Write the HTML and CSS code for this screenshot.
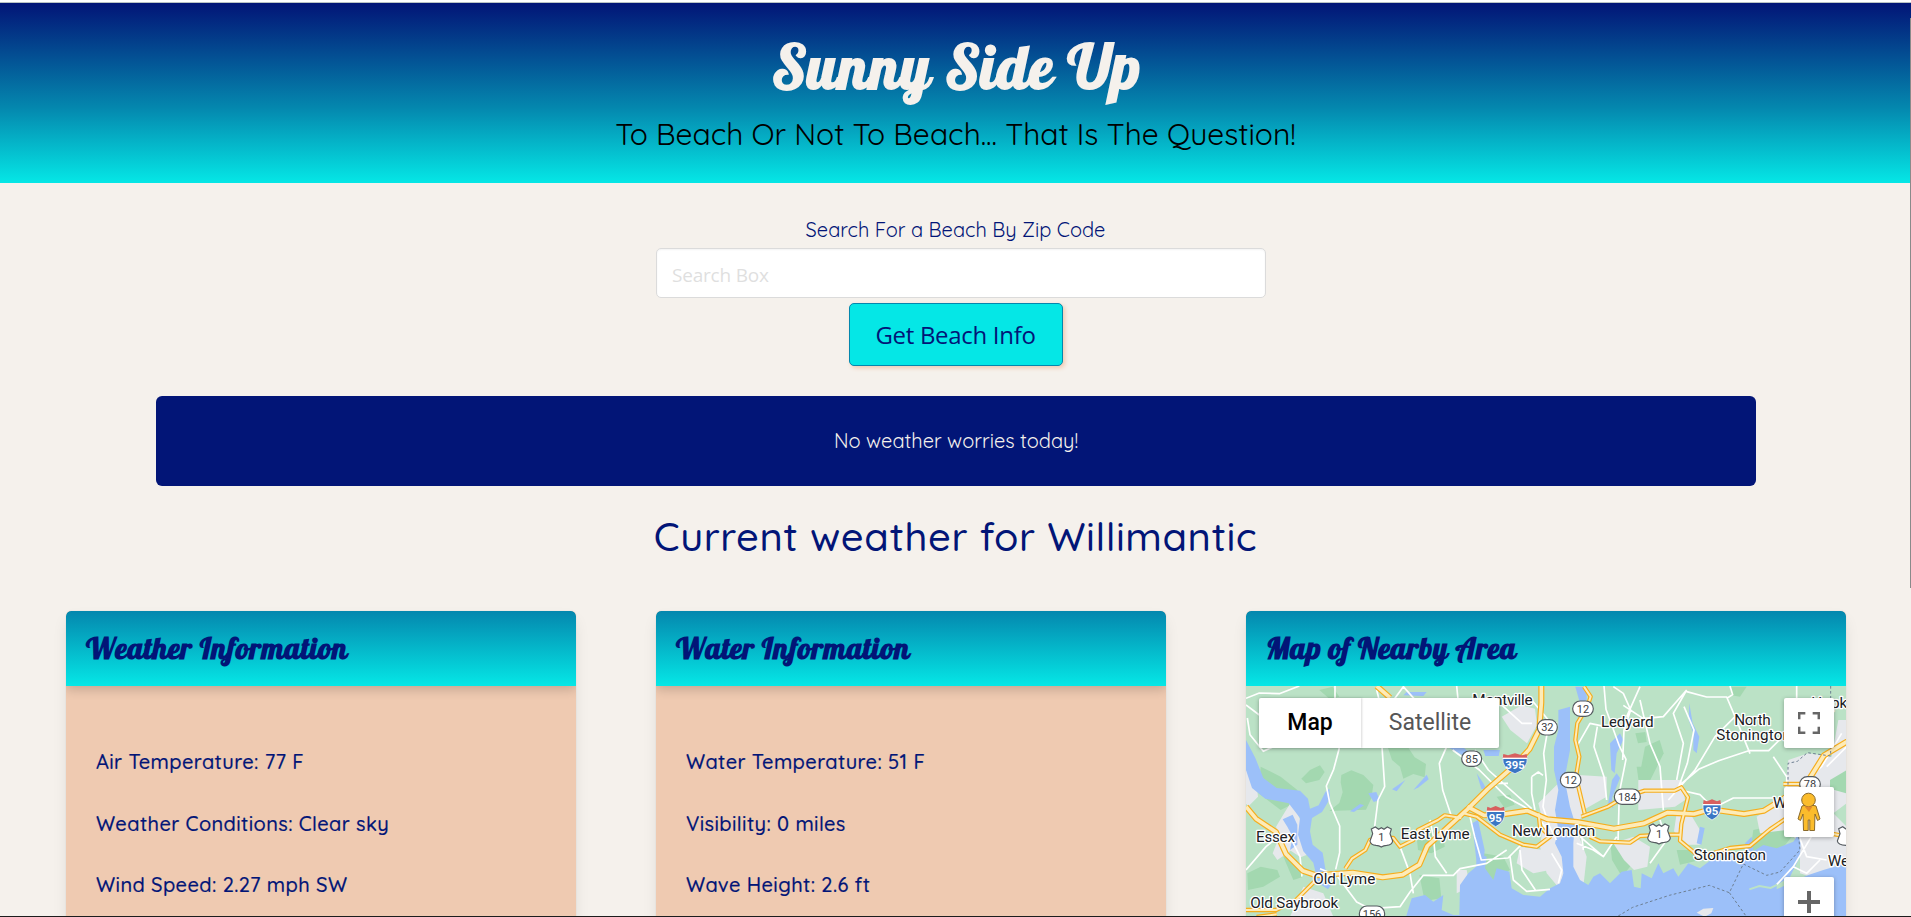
FILE: index.html
```html
<!DOCTYPE html>
<html lang="en">
<head>
<meta charset="utf-8">
<title>Sunny Side Up</title>
<link rel="stylesheet" href="styles.css">
</head>
<body>
<div class="page">
  <header class="hero">
    <h1 class="hero-title">Sunny Side Up</h1>
    <p class="hero-subtitle">To Beach Or Not To Beach... That Is The Question!</p>
  </header>

  <form class="search">
    <label class="search-label" for="zip">Search For a Beach By Zip Code</label>
    <input class="search-input" id="zip" type="text" placeholder="Search Box">
    <button class="search-button" type="button">Get Beach Info</button>
  </form>

  <div class="alert">No weather worries today!</div>
  <h2 class="current">Current weather for Willimantic</h2>

  <main class="cards">
    <section class="card">
      <h3 class="card-header">Weather Information</h3>
      <ul class="card-list">
        <li>Air Temperature: 77 F</li>
        <li>Weather Conditions: Clear sky</li>
        <li>Wind Speed: 2.27 mph SW</li>
      </ul>
    </section>
    <section class="card">
      <h3 class="card-header">Water Information</h3>
      <ul class="card-list">
        <li>Water Temperature: 51 F</li>
        <li>Visibility: 0 miles</li>
        <li>Wave Height: 2.6 ft</li>
      </ul>
    </section>
    <section class="card card-map">
      <h3 class="card-header">Map of Nearby Area</h3>
      <div class="map">
        <svg class="map-canvas" width="600" height="231" viewBox="48 288 1800 693">
          <rect class="land" x="48" y="288" width="1800" height="693"/>

          <!-- woodland -->
          <g class="wood">
            <path d="M334 555l30-14 36 14 30 30-6 40-16 34-110 4 30-24 10-32-6-30z"/>
            <path d="M474 474l60-2 20 30 34 20-4 40-34-10-30 14-10-36-24-20z"/>
            <path d="M92 530l60 30 50 40 10 30-60 30-66-50z"/>
            <path d="M240 540l30-14 14 20-16 24-40 10-14-14z"/>
            <path d="M268 300l40-10 20 30-30 6z"/>
            <path d="M52 850l40-20 50 10 8 20-50 30-46 10z"/>
            <path d="M560 740l40-20 40 10 4 40-40 20-40-10z"/>
            <path d="M568 855l60 10 6 60-50 8z"/>
            <path d="M800 620l40-6 14 30-30 10z"/>
            <path d="M730 380l50 10 10 30-40-6z"/>
            <path d="M760 790l60 10 20 40-50 30-30-20z"/>
            <path d="M1140 750l70 20 6 40-40 50-30-50z"/>
            <path d="M1216 430l30-4 4 30-26 4z"/>
            <path d="M1245 470l44-20 12 40-40 80-34-4z"/>
            <path d="M1220 530l30 0 6 40-30 4z"/>
            <path d="M1570 720l80-18 50 20-40 50-60 60-44-20z"/>
            <path d="M1500 290l50 0-20 30-26-4z"/>
            <path d="M1340 780l60 0 10 30-60 14z"/>
            <path d="M160 800l40 10 20 50-30 10z"/>
          </g>

          <!-- built-up areas -->
          <g class="urban">
            <path d="M48 540l30 30 6 50-30 30-6-10z"/>
            <path d="M186 632l26 60 20 60 30 30-50 20-30-20-40 28-14-20 20-50-10-30 28-46z"/>
            <path d="M815 380l60-34 40 10 6 50-30 54-50-40z"/>
            <path d="M925 640l60-60 60-25 85 5 0 60-70 40-20 60 30 80-10 90-60 20-50-60-20-80 10-70z"/>
            <path d="M870 770l70 10 20 60-50 10-50-30z"/>
            <path d="M1225 570h130l10 60-30 20-110 10z"/>
            <path d="M1340 670l40 0 36 60-4 34-40 0-40-40z"/>
            <path d="M1150 760l60-20 50 30-8 60-40 10-30-30z"/>
            <path d="M1675 510l60-20 70 10 20-110 25 0v250l-40 30 40 40v140l-80 20-60-20 0-90-40-40-80 10-10-50 30-20 50-10z"/>
            <path d="M680 840l30 0 10 50-40 20z"/>
            <path d="M220 890l60 20 30 70h-130z"/>
          </g>
          <path class="wood" d="M1800 570l50-30v70l-50-14z"/>

          <!-- sea, sound and rivers -->
          <g class="water">
            <path d="M528 981L545 925 585 915 610 935 640 915 635 960 670 975 688 975 690 885 715 850 738 830 742 790 770 800 765 835 790 870 800 835 838 845 845 895 880 915 930 920 960 895 990 880 1000 850 995 800 975 760 985 720 975 660 985 600 972 540 972 470 985 420 985 360 1020 350 1020 480 1005 560 1010 600 1020 650 1035 700 1030 760 1030 830 1050 870 1075 885 1090 860 1110 850 1140 880 1175 845 1205 840 1212 890 1232 895 1235 850 1265 865 1285 820 1300 850 1330 835 1345 860 1375 820 1410 835 1450 805 1480 790 1530 795 1555 765 1560 790 1600 765 1640 775 1690 755 1700 740 1712 745 1710 800 1680 860 1640 885 1640 898 1700 870 1735 855 1780 840 1848 820V981z"/>
            <path d="M48 450l28 54 24 60 40 30 70 8 24 24 6 30 26-10 20-40 12-10 2 30-24 40-30 18-6 40 8 40 30 24 10 60 20 30-14 20-30-20-14-60-30-34-16-50 6-50-34-44-70-14-40-32-22-66z"/>
            <path d="M158 688l30-14 14 30 0 60-22 16 8-40-16-30z"/>
            <path d="M1140 460l30-30 10 20-20 40-6 60-10-10z"/>
            <path d="M1146 570l14-20 10 14-24 60 4 30-16-10z"/>
            <path d="M726 700l18-10 20 90-4 50-18 4z"/>
            <path d="M500 604l-14-6 40-28z"/>
            <path d="M360 664l30-22 12 4-30 20z"/>
            <path d="M415 610l24-4 10 24-18 6z"/>
            <path d="M550 600l40-46 6 14-30 24z"/>
            <path d="M658 474l44 0 40 34-14 4z"/>
            <path d="M760 480l50 0-4 18-40 0z"/>
            <path d="M530 306l60 0-10 12-60-2z"/>
            <path d="M1036 290l34 0 0 40-20 10z"/>
            <path d="M1378 340l10 60 20 40-8 50-10-10 0-50-14-40z"/>
            <path d="M1410 710l-10 50 14 4 10-50z"/>
            <path d="M1545 760l20-20 6 50-20 0z"/>
            <path d="M740 550l20 30 10 20-16-4z"/>
          </g>
          <path class="urban" d="M1400 968l20-12 30-2-6 16-20 10z"/>
          <path class="urban" d="M988 824q12 10 8 40l-10 6z"/>

          <!-- local roads -->
          <g class="road">
            <path d="M48 325l40-16 60 2 60-23M48 345l40 30M130 470l-30 14-40-50-8-50M315 288l0 40 20 60-8 90-16 60-22 50 10 50 30 70 0 80-12 50M48 840l60-70 50-40M180 740l30 60 6 60M440 300l20 80-4 90 8 120-20 40-10 80M480 345l40-55 80 90 50 90-22 50 10 80 30 90M680 288l6 60 60 50 60 70M668 480l80 60 80 80 90 50 40 60M735 480l40 60 130 116M810 340l66 60 30 0M905 330l50 60 26 10M955 410l-14 80 8 80-10 80 20 60 20 40M905 560l0 50 10 50M905 560l20-14 14 10M830 780l-60 40-80 16-20 20-90 0-40 50-30 44-90 6-40-20-60-80-50-20M600 690l10 50 6 60 34 50M510 770l30 80 10 60M720 680l14 60 20 70 80-6 40-40M840 800l10 70 40 34 70-6M870 780l6 60 40 60M965 790l30 50-10 40M790 580l44 0"/>
            <path transform="translate(990 0)" d="M132 288l6 70 40 110 20 40-20 100-4 150M160 290l30 20 22 50-20 60-4 90M240 290l-40 90M380 300l-70 80-60 6-60-40M240 330l30 130 30 70 10 130M380 305l60 16 60 0 30 70 40 100M510 288l8 26-16 10M380 300l-40 70 30 90-20 110M372 350l30 70-20 100-26 70M525 380l-60 60-60 100-80 90M356 588l60-50 60-26 90-30 60 0 40-40M640 500l40 60 0 40M360 600l60 14 40 40 60-30 120 0M140 630l-8-70-30-90 10-60M50 470l40-70 46 10M760 730l-60 100-50 54M700 830l40 20 40-40M710 720l30 80 60 10M60 740l70 60 40-60M50 760l50 20 30 20M60 690l10 90M710 288v40M300 690l20 60-50 70M845 430l-60 100-50 40M800 530l60-60"/>
          </g>
          <path class="spit" d="M1558 898l30-10 34 6 20-10"/>

          <!-- highways: casing, then fill -->
          <g class="hwy-edge">
            <path d="M440 288l40 35"/>
            <path d="M48 650l30 36 60 40 30 66 50 50 40 14 110-8 90 14 60-8 50-30 24-56 120-110 60-60 80-70 46-50 30-60 6-80V288"/>
            <path d="M712 650l50 26 50-2 80-12 60 26 90 8 110 20 90-16 70-32 80 4 50-14 100 14 60-10 80-50 40-20 60-96 60-36 100-60 40-50"/>
            <path class="thin" d="M346 836l20-30 40-26 14-30 40-6 30 0 20 26 40-20 14-30 60-30 20-14 50 8"/>
            <path class="thin" d="M700 670l40 10 70 54 70 30 40 6 40-30-30-30-4-40"/>
            <path class="thin" d="M48 960l90 0 60-30 60-60M80 981l60-8"/>
            <path class="thin" d="M1062 290l20 30-10 30-30 50-6 50 12 50-10 60 26 110M1054 680l80-30 40-24 70-24 90 0 20-10 20 30-20 80-4 50 60 50 90-28 60-6 60-50 50-34 40-30"/>
            <path class="thin" d="M1080 740l30 14 90 4 30-20 70-4 50 0M1660 582l80 0M1800 730l50 10"/>
          </g>
          <g class="hwy">
            <path d="M440 288l40 35"/>
            <path d="M48 650l30 36 60 40 30 66 50 50 40 14 110-8 90 14 60-8 50-30 24-56 120-110 60-60 80-70 46-50 30-60 6-80V288"/>
            <path d="M712 650l50 26 50-2 80-12 60 26 90 8 110 20 90-16 70-32 80 4 50-14 100 14 60-10 80-50 40-20 60-96 60-36 100-60 40-50"/>
            <path class="thin" d="M346 836l20-30 40-26 14-30 40-6 30 0 20 26 40-20 14-30 60-30 20-14 50 8"/>
            <path class="thin" d="M700 670l40 10 70 54 70 30 40 6 40-30-30-30-4-40"/>
            <path class="thin" d="M48 960l90 0 60-30 60-60M80 981l60-8"/>
            <path class="thin" d="M1062 290l20 30-10 30-30 50-6 50 12 50-10 60 26 110M1054 680l80-30 40-24 70-24 90 0 20-10 20 30-20 80-4 50 60 50 90-28 60-6 60-50 50-34 40-30"/>
            <path class="thin" d="M1080 740l30 14 90 4 30-20 70-4 50 0M1660 582l80 0M1800 730l50 10"/>
          </g>

          <!-- state borders -->
          <path class="border" d="M1802 288v210l-70-10-30 26-28 6v80M1706 740l4 40-60 66-40 10-70-34-42 86-60-22-120 30-110 36-50 30M1498 908l50 70"/>

          <!-- route shields -->
          <g class="shield">
            <rect x="922" y="389" width="60" height="46" rx="23"/><text x="952" y="424">32</text>
            <rect x="695" y="483" width="60" height="46" rx="23"/><text x="725" y="518">85</text>
            <rect x="1028" y="333" width="62" height="46" rx="23"/><text x="1059" y="368">12</text>
            <rect x="991" y="547" width="62" height="46" rx="23"/><text x="1022" y="582">12</text>
            <rect x="1153" y="597" width="78" height="46" rx="23"/><text x="1192" y="633">184</text>
            <rect x="1709" y="560" width="62" height="46" rx="23"/><text x="1740" y="595">78</text>
            <rect x="388" y="948" width="76" height="46" rx="23"/><text x="426" y="983">156</text>
            <path d="M424 717l12-6 10 7 8-5 8 5 10-7 12 6-4 14 8 22q-2 12-18 13-9 0-16 5-7-5-16-5-16-1-18-13l8-22z"/><text x="454" y="753">1</text>
            <path d="M1257 708l12-6 10 7 8-5 8 5 10-7 12 6-4 14 8 22q-2 12-18 13-9 0-16 5-7-5-16-5-16-1-18-13l8-22z"/><text x="1287" y="744">1</text>
            <path d="M1826 716l12-6 10 7 8-5 8 5v54q-9 0-16-5-24-1-26-13l8-22z"/>
          </g>
          <g class="interstate">
            <path class="blue" d="M818 500h74q2 38-37 51-39-13-37-51z"/><path class="red" d="M820 492l14 4 21-6 21 6 14-4 2 12h-74z"/><path class="line" d="M818 505h74"/><text x="855" y="537">395</text>
            <path class="blue" d="M770 660h54q4 36-27 50-31-14-27-50z"/><path class="red" d="M772 650l10 4 15-6 15 6 10-4 2 13h-54z"/><path class="line" d="M770 664h54"/><text x="796" y="695">95</text>
            <path class="blue" d="M1419 640h54q4 36-27 50-31-14-27-50z"/><path class="red" d="M1421 630l10 4 15-6 15 6 10-4 2 13h-54z"/><path class="line" d="M1419 644h54"/><text x="1445" y="676">95</text>
          </g>

          <!-- places -->
          <g class="place">
            <text x="727" y="344" textLength="181">Montville</text>
            <text x="1113" y="410" textLength="158">Ledyard</text>
            <text x="1513" y="404" textLength="109">North</text>
            <text x="1459" y="449" textLength="224">Stonington</text>
            <text x="1744" y="353">Hopkinton</text>
            <text x="78" y="756" textLength="117">Essex</text>
            <text x="512" y="747" textLength="207">East Lyme</text>
            <text x="846" y="738" textLength="250">New London</text>
            <text x="250" y="882" textLength="186">Old Lyme</text>
            <text x="61" y="955" textLength="264">Old Saybrook</text>
            <text x="1391" y="809" textLength="217">Stonington</text>
            <text x="1629" y="655">Westerly</text>
            <text x="1793" y="827">Weekapaug</text>
          </g>
        </svg>

        <div class="map-type"><span class="on">Map</span><span>Satellite</span></div>
        <div class="map-btn fullscreen">
          <svg width="22" height="22" viewBox="0 0 18 18"><path d="M0 0v6h2V2h4V0zm16 0h-4v2h4v4h2V0zm0 16h-4v2h6v-6h-2zM2 12H0v6h6v-2H2z" fill="#666"/></svg>
        </div>
        <div class="map-btn pegman">
          <svg width="24" height="40" viewBox="0 0 24 40">
            <g fill="#fbbc2c" stroke="#8a6a2c" stroke-width="1">
              <path d="M5 14L1 27l2.500 1.500L6 22l.5 16.500h4.700V28h1.600v10.500h4.700L18 22l2.500 6.500L23 27l-4-13q-7-3-14 0z"/>
              <circle cx="11.500" cy="8" r="6.800"/>
            </g>
            <path d="M7.500 14.500h8L12 20z" fill="#e58a2a"/>
          </svg>
        </div>
        <div class="map-btn zoom-in">
          <svg width="22" height="22" viewBox="0 0 22 22"><path d="M9 0h4v9h9v4h-9v9H9v-9H0V9h9z" fill="#666"/></svg>
        </div>
      </div>
    </section>
  </main>
  <div class="scroll-thumb"></div>
  <div class="frame-bottom"></div>
</div>
</body>
</html>
```
FILE: styles.css
```css
* { box-sizing: border-box; }
body { margin: 0; background: #f5f1ec; color: #021577; font-family: "Quicksand", Lato, sans-serif; font-size: 20px; }
h1, h2, h3, p, ul { margin: 0; padding: 0; font-weight: inherit; }
ul { list-style: none; }
.page { position: relative; height: 917px; overflow: hidden; border-top: 2px solid #fff; }

.hero { display: flex; flex-direction: column; align-items: center; height: 181px; border-top: 1px solid #b9c3c4; background: linear-gradient(#021577, #0487ae 58%, #05e7e6); }
.hero-title { margin-top: 17px; height: 92px; line-height: 94px; padding-left: 2px; color: #f5f1ec; font-family: "Lobster", "Liberation Serif", serif; font-weight: 700; font-size: 60px; letter-spacing: 1px; }
.hero-subtitle { height: 44px; line-height: 44px; color: #000; font-size: 30px; }

.search { display: flex; flex-direction: column; align-items: center; padding-top: 32px; }
.search-label { height: 30px; line-height: 28px; margin-top: 1px; }
.search-input { width: 610px; height: 50px; margin: 2px 0 5px 11px; padding: 3px 15px 0 15px; border: 1px solid #dbdbdb; border-radius: 5px; background: #fff; box-shadow: inset 0 1px 2px rgba(10,10,10,.05); font-family: "Segoe UI", "Open Sans", sans-serif; font-size: 19px; letter-spacing: -.2px; }
.search-input::placeholder { color: #dfdfdf; opacity: 1; }
.search-button { width: 214px; height: 63px; padding: 0; border: 1px solid #0487ae; border-radius: 5px; background: #05e7e6; box-shadow: 2px 2px 4px #efcab1; color: #021577; font-family: "Segoe UI", "Open Sans", sans-serif; font-size: 24px; letter-spacing: -.3px; }

.alert { width: 1600px; height: 90px; margin: 30px 0 0 156px; border-radius: 6px; background: #021577; color: #f5f1ec; line-height: 90px; text-align: center; }
.current { height: 125px; padding-top: 20px; line-height: 60px; text-align: center; font-size: 40px; font-weight: 500; letter-spacing: .53px; }

.cards { display: flex; gap: 80px; padding-left: 66px; }
.card { width: 510px; height: 400px; border-radius: 5px; background: #efcab1; box-shadow: 0 8px 16px -2px rgba(10,10,10,.1), 0 0 0 1px rgba(10,10,10,.02); }
.card-map { width: 600px; }
.card-header { height: 75px; padding-left: 20px; border-radius: 5px 5px 0 0; background: linear-gradient(#0487ae, #05e7e6); box-shadow: 0 3px 12px rgba(10,10,10,.2); clip-path: inset(0 0 -14px 0 round 5px 5px 0 0); line-height: 75px; font-family: "Lobster", "Liberation Serif", serif; font-weight: 700; font-size: 30px; letter-spacing: .63px; }
.card-list { padding: 61px 0 0 30px; font-weight: 500; letter-spacing: .4px; -webkit-text-stroke: .2px #021577; }
.card-list li { height: 61.500px; line-height: 30px; }

.map { position: relative; height: 325px; overflow: hidden; background: #9cc0f9; font-family: Roboto, sans-serif; }
.map-canvas { display: block; }
.land { fill: #bbe2c6; }
.wood { fill: #a3d8b0; }
.urban { fill: #e6e8ec; }
.water { fill: #9cc0f9; }
.road { fill: none; stroke: #fff; stroke-width: 5; stroke-linejoin: round; }
.spit { fill: none; stroke: #bbe2c6; stroke-width: 6; }
.hwy-edge, .hwy { fill: none; stroke-linejoin: round; }
.hwy-edge { stroke: #f6ad1c; stroke-width: 18; }
.hwy { stroke: #fdebb8; stroke-width: 11; }
.hwy-edge .thin { stroke-width: 13; }
.hwy .thin { stroke-width: 6; }
.border { fill: none; stroke: #6d7f92; stroke-width: 3; stroke-dasharray: 8 7; }
.shield rect, .shield path { fill: #fff; stroke: #555b60; stroke-width: 3.500; }
.shield text { fill: #3c4043; font-size: 33px; text-anchor: middle; }
.interstate .blue { fill: #3a76c4; stroke: #fff; stroke-width: 2; }
.interstate .red { fill: #d8605e; }
.interstate .line { stroke: #fff; stroke-width: 4; }
.interstate text { fill: #fff; font-size: 34px; font-weight: 700; text-anchor: middle; }
.place text { fill: #202124; stroke: #fff; stroke-width: 8; stroke-linejoin: round; paint-order: stroke; font-size: 46px; }

.map-type { position: absolute; left: 13px; top: 12px; display: flex; height: 50px; border-radius: 2px; background: #fff; box-shadow: 0 1px 4px rgba(0,0,0,.3); line-height: 50px; text-align: center; font-size: 23px; color: #565656; }
.map-type span { width: 138px; }
.map-type .on { width: 102px; color: #000; font-weight: 500; box-shadow: 1px 0 2px rgba(0,0,0,.15); }
.map-btn { position: absolute; right: 12px; display: flex; align-items: center; justify-content: center; width: 50px; height: 50px; border-radius: 2px; background: #fff; box-shadow: 0 1px 4px rgba(0,0,0,.3); }
.fullscreen { top: 12px; }
.pegman { top: 101px; }
.zoom-in { top: 191px; }
.scroll-thumb { position: absolute; right: 0; top: 16px; width: 1px; height: 570px; background: #8a8a8a; }
.frame-bottom { position: absolute; left: 0; right: 0; bottom: 0; height: 1px; background: #1c1c1c; }
```
